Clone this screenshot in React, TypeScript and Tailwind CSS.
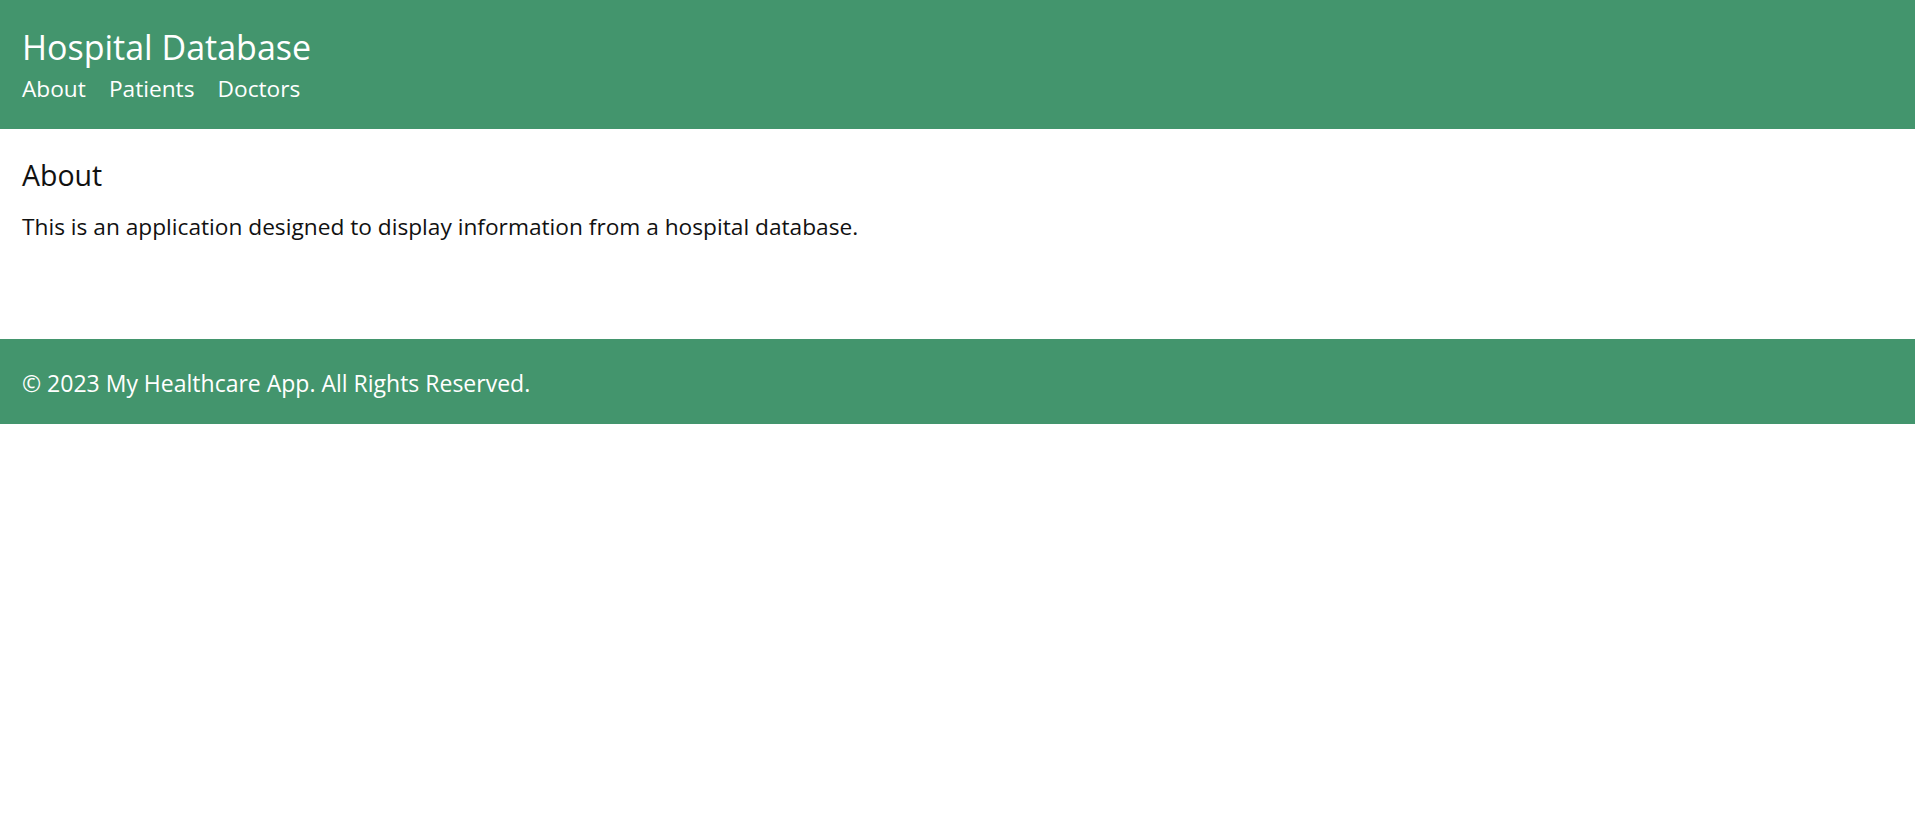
export default function App() {
  const links = ['About', 'Patients', 'Doctors'];

  return (
    <div className="min-h-screen bg-white font-['Open_Sans',sans-serif] text-[#111]">
      <header className="h-[129px] bg-[#43956d] px-[22px] pt-[27px] text-white">
        <h1 className="text-[34px] leading-[40px] font-normal">Hospital Database</h1>
        <nav className="mt-[7px] flex gap-[23px] text-[22.7px] leading-[30px]">
          {links.map((link) => (
            <a key={link} href="#" className="text-white">
              {link}
            </a>
          ))}
        </nav>
      </header>

      <main className="px-[22px] pt-[28px] pb-[97px]">
        <h2 className="text-[28.5px] leading-[36px] font-normal">About</h2>
        <p className="mt-[19px] text-[22.7px] leading-[30px]">
          This is an application designed to display information from a hospital database.
        </p>
      </main>

      <footer className="h-[85px] bg-[#43956d] px-[22px] pt-[29px] text-white">
        <p className="text-[23px] leading-[30px]">© 2023 My Healthcare App. All Rights Reserved.</p>
      </footer>
    </div>
  );
}
